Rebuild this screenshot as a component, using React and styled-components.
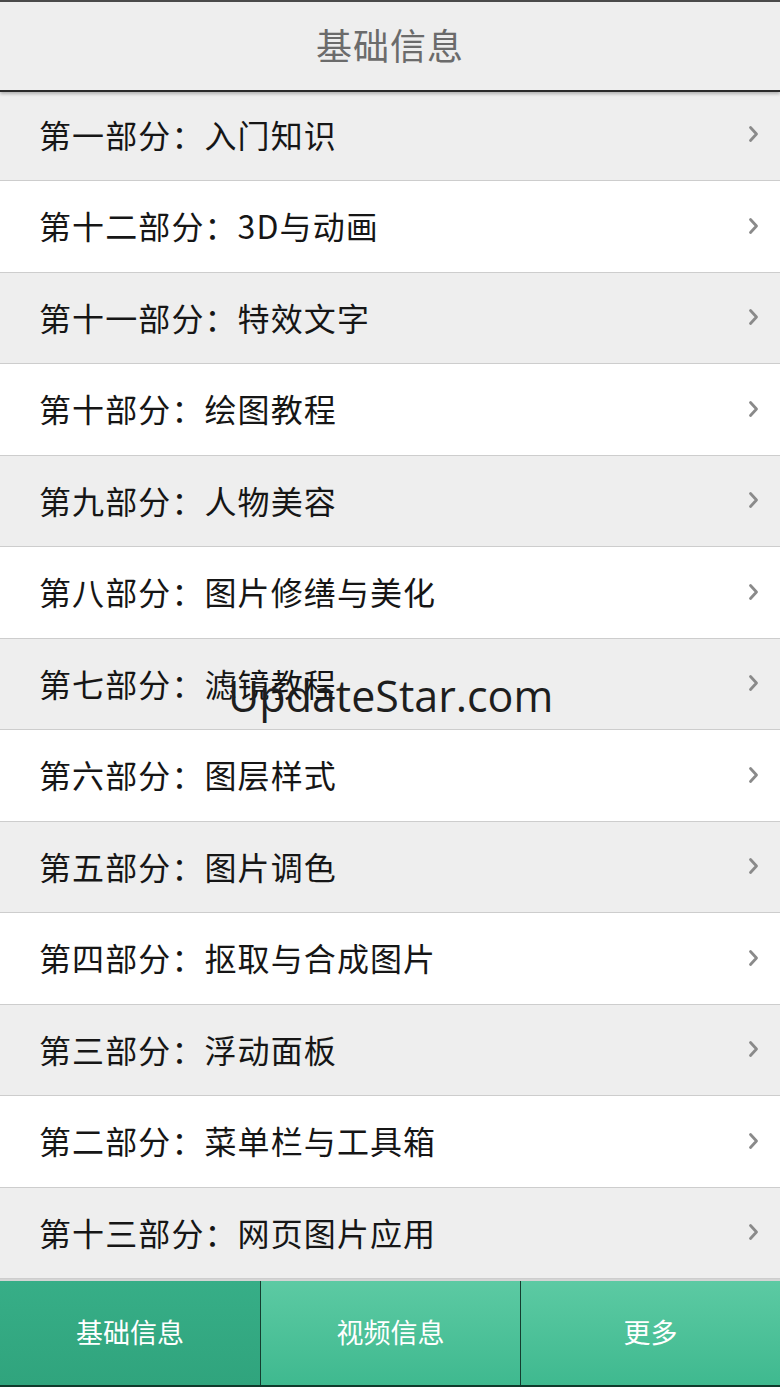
import styled, { createGlobalStyle } from 'styled-components';

const GlobalStyle = createGlobalStyle`
  html, body {
    margin: 0;
    padding: 0;
    background: #ffffff;
  }
  body {
    font-family: "Noto Sans CJK SC", "Noto Sans", sans-serif;
  }
`;

const Screen = styled.div`
  position: relative;
  width: 780px;
  height: 1387px;
  display: flex;
  flex-direction: column;
  overflow: hidden;
  background: #fff;
`;

const Header = styled.header`
  position: relative;
  flex: none;
  display: flex;
  align-items: center;
  justify-content: center;
  padding-bottom: 4px;
  box-sizing: border-box;
  height: 92px;
  background: #eeeeee;
  border-top: 2px solid #4a4a4a;
  border-bottom: 2px solid #2a2a2a;
  box-shadow: 0 2px 3px rgba(0, 0, 0, 0.25);
  z-index: 1;
  color: #6b6b6b;
  font-size: 36px;
  letter-spacing: 1px;
`;

const List = styled.ul`
  list-style: none;
  margin: -2.5px 0 0;
  padding: 0;
  flex: none;
  display: flex;
  flex-direction: column;
`;

const Row = styled.li`
  flex: none;
  display: flex;
  align-items: center;
  justify-content: space-between;
  padding: 0 20px 2px 39px;
  box-sizing: border-box;
  height: 91.5px;
  background: ${(p) => (p.$shaded ? '#eeeeee' : '#ffffff')};
  border-bottom: 1px solid #cdcdcd;
  color: #161616;
  font-size: 32px;
  letter-spacing: 1.1px;
`;

const Chevron = styled.svg`
  width: 13px;
  height: 20px;
  flex: none;
  margin-top: 1px;
`;

const TabBar = styled.nav`
  flex: 1;
  display: grid;
  grid-template-columns: 260px 260px 1fr;
  border-top: 2px solid #d4d4d4;
  border-bottom: 2px solid #0f3b2c;
`;

const Tab = styled.button`
  border: none;
  margin: 0;
  padding: 0 0 4px;
  font: inherit;
  font-size: 27px;
  color: #ffffff;
  display: flex;
  align-items: center;
  justify-content: center;
  border-left: ${(p) => (p.$first ? 'none' : '1px solid #143d2f')};
  background: ${(p) =>
    p.$active
      ? 'linear-gradient(#37ae87, #30a47d)'
      : 'linear-gradient(#5ccaa3, #3fb98f)'};
`;

const Watermark = styled.div`
  position: absolute;
  left: 228px;
  top: 666px;
  font-family: "Open Sans", "DejaVu Sans", sans-serif;
  font-size: 43px;
  color: #1e1e1e;
  pointer-events: none;
`;

const items = [
  '第一部分：入门知识',
  '第十二部分：3D与动画',
  '第十一部分：特效文字',
  '第十部分：绘图教程',
  '第九部分：人物美容',
  '第八部分：图片修缮与美化',
  '第七部分：滤镜教程',
  '第六部分：图层样式',
  '第五部分：图片调色',
  '第四部分：抠取与合成图片',
  '第三部分：浮动面板',
  '第二部分：菜单栏与工具箱',
  '第十三部分：网页图片应用',
];

export default function App() {
  return (
    <Screen>
      <GlobalStyle />
      <Header>基础信息</Header>
      <List>
        {items.map((t, i) => (
          <Row key={t} $shaded={i % 2 === 0}>
            <span>{t}</span>
            <Chevron viewBox="0 0 13 20">
              <path
                d="M3.5 3.5 L9.5 10 L3.5 16.5"
                fill="none"
                stroke="#8a8a8a"
                strokeWidth="2.8"
                strokeLinecap="round"
                strokeLinejoin="round"
              />
            </Chevron>
          </Row>
        ))}
      </List>
      <TabBar>
        <Tab $active $first>基础信息</Tab>
        <Tab>视频信息</Tab>
        <Tab>更多</Tab>
      </TabBar>
      <Watermark>UpdateStar.com</Watermark>
    </Screen>
  );
}
